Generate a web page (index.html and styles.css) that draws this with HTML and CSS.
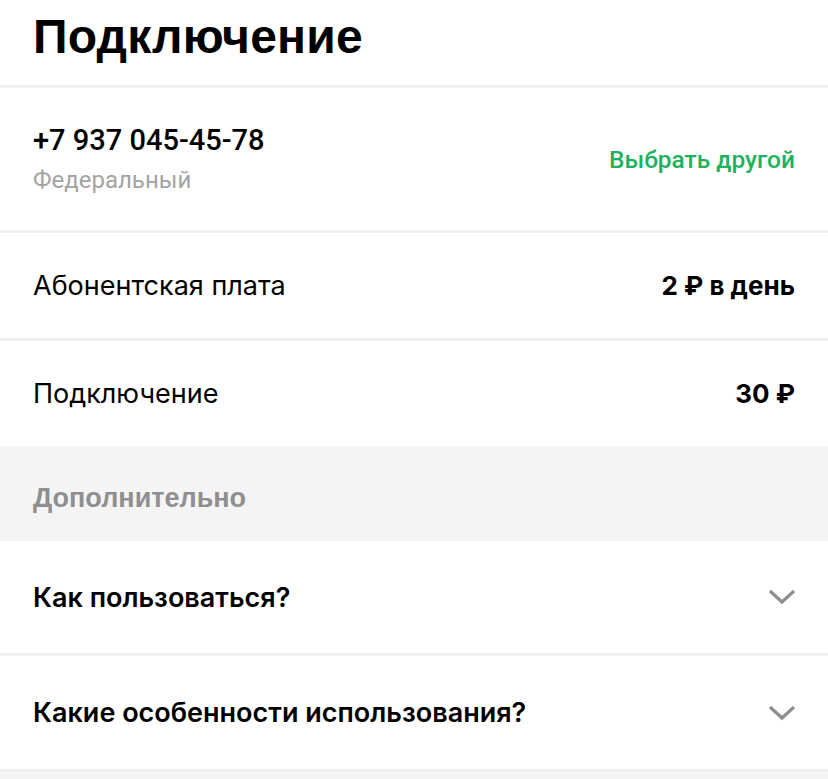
FILE: index.html
```html
<!DOCTYPE html>
<html lang="ru">
  <head>
    <meta charset="UTF-8" />
    <meta name="viewport" content="width=device-width, initial-scale=1.0" />
    <title>Подключение</title>
    <link rel="stylesheet" href="styles.css">
  </head>
  <body>
    <h1 class="page-title">Подключение</h1>

    <div class="block number-block">
      <div class="number-info">
        <div class="number">+7 937 045-45-78</div>
        <div class="number-type">Федеральный</div>
      </div>
      <a class="change-link" href="#">Выбрать другой</a>
    </div>

    <div class="block row">
      <span class="row-label">Абонентская плата</span>
      <span class="row-value">2 ₽ в день</span>
    </div>

    <div class="block row">
      <span class="row-label">Подключение</span>
      <span class="row-value">30 ₽</span>
    </div>

    <div class="section-title">Дополнительно</div>

    <div class="block faq">
      <span class="faq-question">Как пользоваться?</span>
      <svg class="chevron" viewBox="0 0 28 16" width="28" height="16">
        <path d="M2 2 L14 13 L26 2" fill="none" stroke="#8e8e8e" stroke-width="3.2" />
      </svg>
    </div>

    <div class="block faq">
      <span class="faq-question">Какие особенности использования?</span>
      <svg class="chevron" viewBox="0 0 28 16" width="28" height="16">
        <path d="M2 2 L14 13 L26 2" fill="none" stroke="#8e8e8e" stroke-width="3.2" />
      </svg>
    </div>
    <div class="bottom-space"></div>
  </body>
</html>
```

FILE: styles.css
```css
body {
  margin: 0;
  background: #f4f4f4;
  color: #000;
  font-family: "Roboto", "Liberation Sans", sans-serif;
}
.page-title {
  margin: 0;
  padding: 9px 33px 0;
  height: 76px;
  background: #fff;
  font-family: "Liberation Sans", sans-serif;
  font-size: 48px;
  font-weight: 700;
  line-height: 56px;
  letter-spacing: 0.2px;
}
.block {
  display: flex;
  align-items: center;
  justify-content: space-between;
  padding: 0 33px;
  background: #fff;
  border-top: 3px solid #efefef;
}
.number-block {
  height: 142px;
}
.number-info {
  margin-top: -2px;
}
.number {
  font-size: 29px;
  font-weight: 500;
  line-height: 34px;
}
.number-type {
  margin-top: 9px;
  font-size: 24px;
  color: #a3a3a3;
  line-height: 28px;
}
.change-link {
  color: #1db35e;
  font-size: 24.5px;
  font-weight: 500;
  text-decoration: none;
}
.row {
  height: 105px;
}
.row-label {
  font-family: "Inter", sans-serif;
  font-size: 27px;
}
.row-value {
  font-family: "Inter", sans-serif;
  font-size: 26px;
  font-weight: 700;
}
.section-title {
  height: 95px;
  line-height: 104px;
  padding: 0 33px;
  background: #f4f4f4;
  color: #8f8f8f;
  font-family: "Liberation Sans", sans-serif;
  font-size: 27px;
  font-weight: 700;
}
.section-title + .block {
  border-top: none;
}
.faq {
  height: 112px;
}
.faq + .faq {
  height: 113px;
}
.faq-question {
  font-family: "Inter", sans-serif;
  font-size: 27px;
  font-weight: 600;
}
.chevron {
  display: block;
  margin-right: -1px;
}
.bottom-space {
  height: 20px;
  border-top: 3px solid #efefef;
}
```
